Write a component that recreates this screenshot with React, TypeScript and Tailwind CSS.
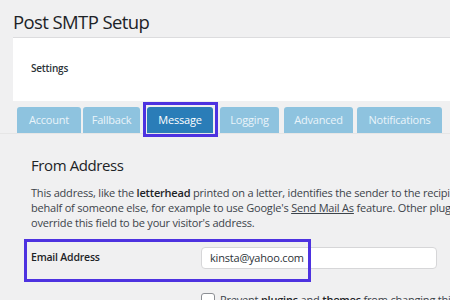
import React from "react";

const tabs = [
  { label: "Account", w: "w-[64px]", ml: "ml-0" },
  { label: "Fallback", w: "w-[57px]", ml: "ml-[2px]" },
  { label: "Message", w: "w-[66px]", ml: "ml-[7px]", active: true },
  { label: "Logging", w: "w-[59px]", ml: "ml-[7px]" },
  { label: "Advanced", w: "w-[69px]", ml: "ml-[5px]" },
  { label: "Notifications", w: "w-[85px]", ml: "ml-[4px]" },
];

export default function App() {
  return (
    <div className="w-[450px] h-[300px] overflow-hidden bg-[#f0f0f1] text-[#3c434a] font-['Open_Sans',sans-serif] tracking-[-0.2px]">
      <h1 className="pl-[13px] pt-[9px] text-[18.5px] leading-[26px] tracking-[-0.6px] text-[#1d2327]">
        Post SMTP Setup
      </h1>

      <div className="ml-[13px] mt-[2px] h-[64px] bg-white border-t border-[#dcdcde] flex items-center pl-[18px] pb-[2px]">
        <span className="text-[10px] font-semibold text-[#2c3338]">Settings</span>
      </div>

      <div className="flex items-end pl-[17px] pt-[6px] border-b border-[#e6e6e6]">
        {tabs.map((t) => (
          <div
            key={t.label}
            className={`relative ${t.ml} ${t.w} h-[26px] rounded-t-[3px] flex items-center justify-center text-[11px] ${
              t.active ? "bg-[#2a7db8] text-white" : "bg-[#8ec3df] text-[#eaf4fa]"
            }`}
          >
            {t.label}
            {t.active && (
              <div className="absolute -left-[4px] -right-[5px] -top-[5px] -bottom-[4px] border-[3px] border-[#4d32e0]" />
            )}
          </div>
        ))}
      </div>

      <div className="pl-[31px] pt-[21px]">
        <h2 className="text-[15px] leading-[20px] font-medium tracking-[-0.4px] text-[#1d2327]">From Address</h2>
        <p className="mt-[10px] text-[11px] leading-[15px] whitespace-nowrap">
          This address, like the <b className="font-semibold text-[#1d2327]">letterhead</b> printed on a letter, identifies the sender to the recipient.
          <br />
          behalf of someone else, for example to use Google's{" "}
          <span className="underline">Send Mail As</span> feature. Other plugins
          <br />
          override this field to be your visitor's address.
        </p>

        <div className="relative mt-[17px] flex items-center h-[22px]">
          <span className="w-[170px] text-[10.5px] font-semibold text-[#1d2327]">Email Address</span>
          <div className="w-[236px] h-[22px] bg-white border border-[#d6d6d8] rounded-[4px] flex items-center pl-[8px] text-[11px] text-[#2c3338]">
            kinsta@yahoo.com
          </div>
          <div className="absolute -left-[7px] w-[287px] -top-[8px] -bottom-[13px] border-[3px] border-[#4d32e0]" />
        </div>

        <div className="mt-[23px] ml-[170px] flex items-center gap-[5px] text-[11px] whitespace-nowrap">
          <div className="w-[14px] h-[14px] rounded-[3px] border border-[#8c8f94] bg-white shrink-0" />
          <span>
            Prevent <b className="font-semibold text-[#1d2327]">plugins</b> and{" "}
            <b className="font-semibold text-[#1d2327]">themes</b> from changing this
          </span>
        </div>
      </div>
    </div>
  );
}
